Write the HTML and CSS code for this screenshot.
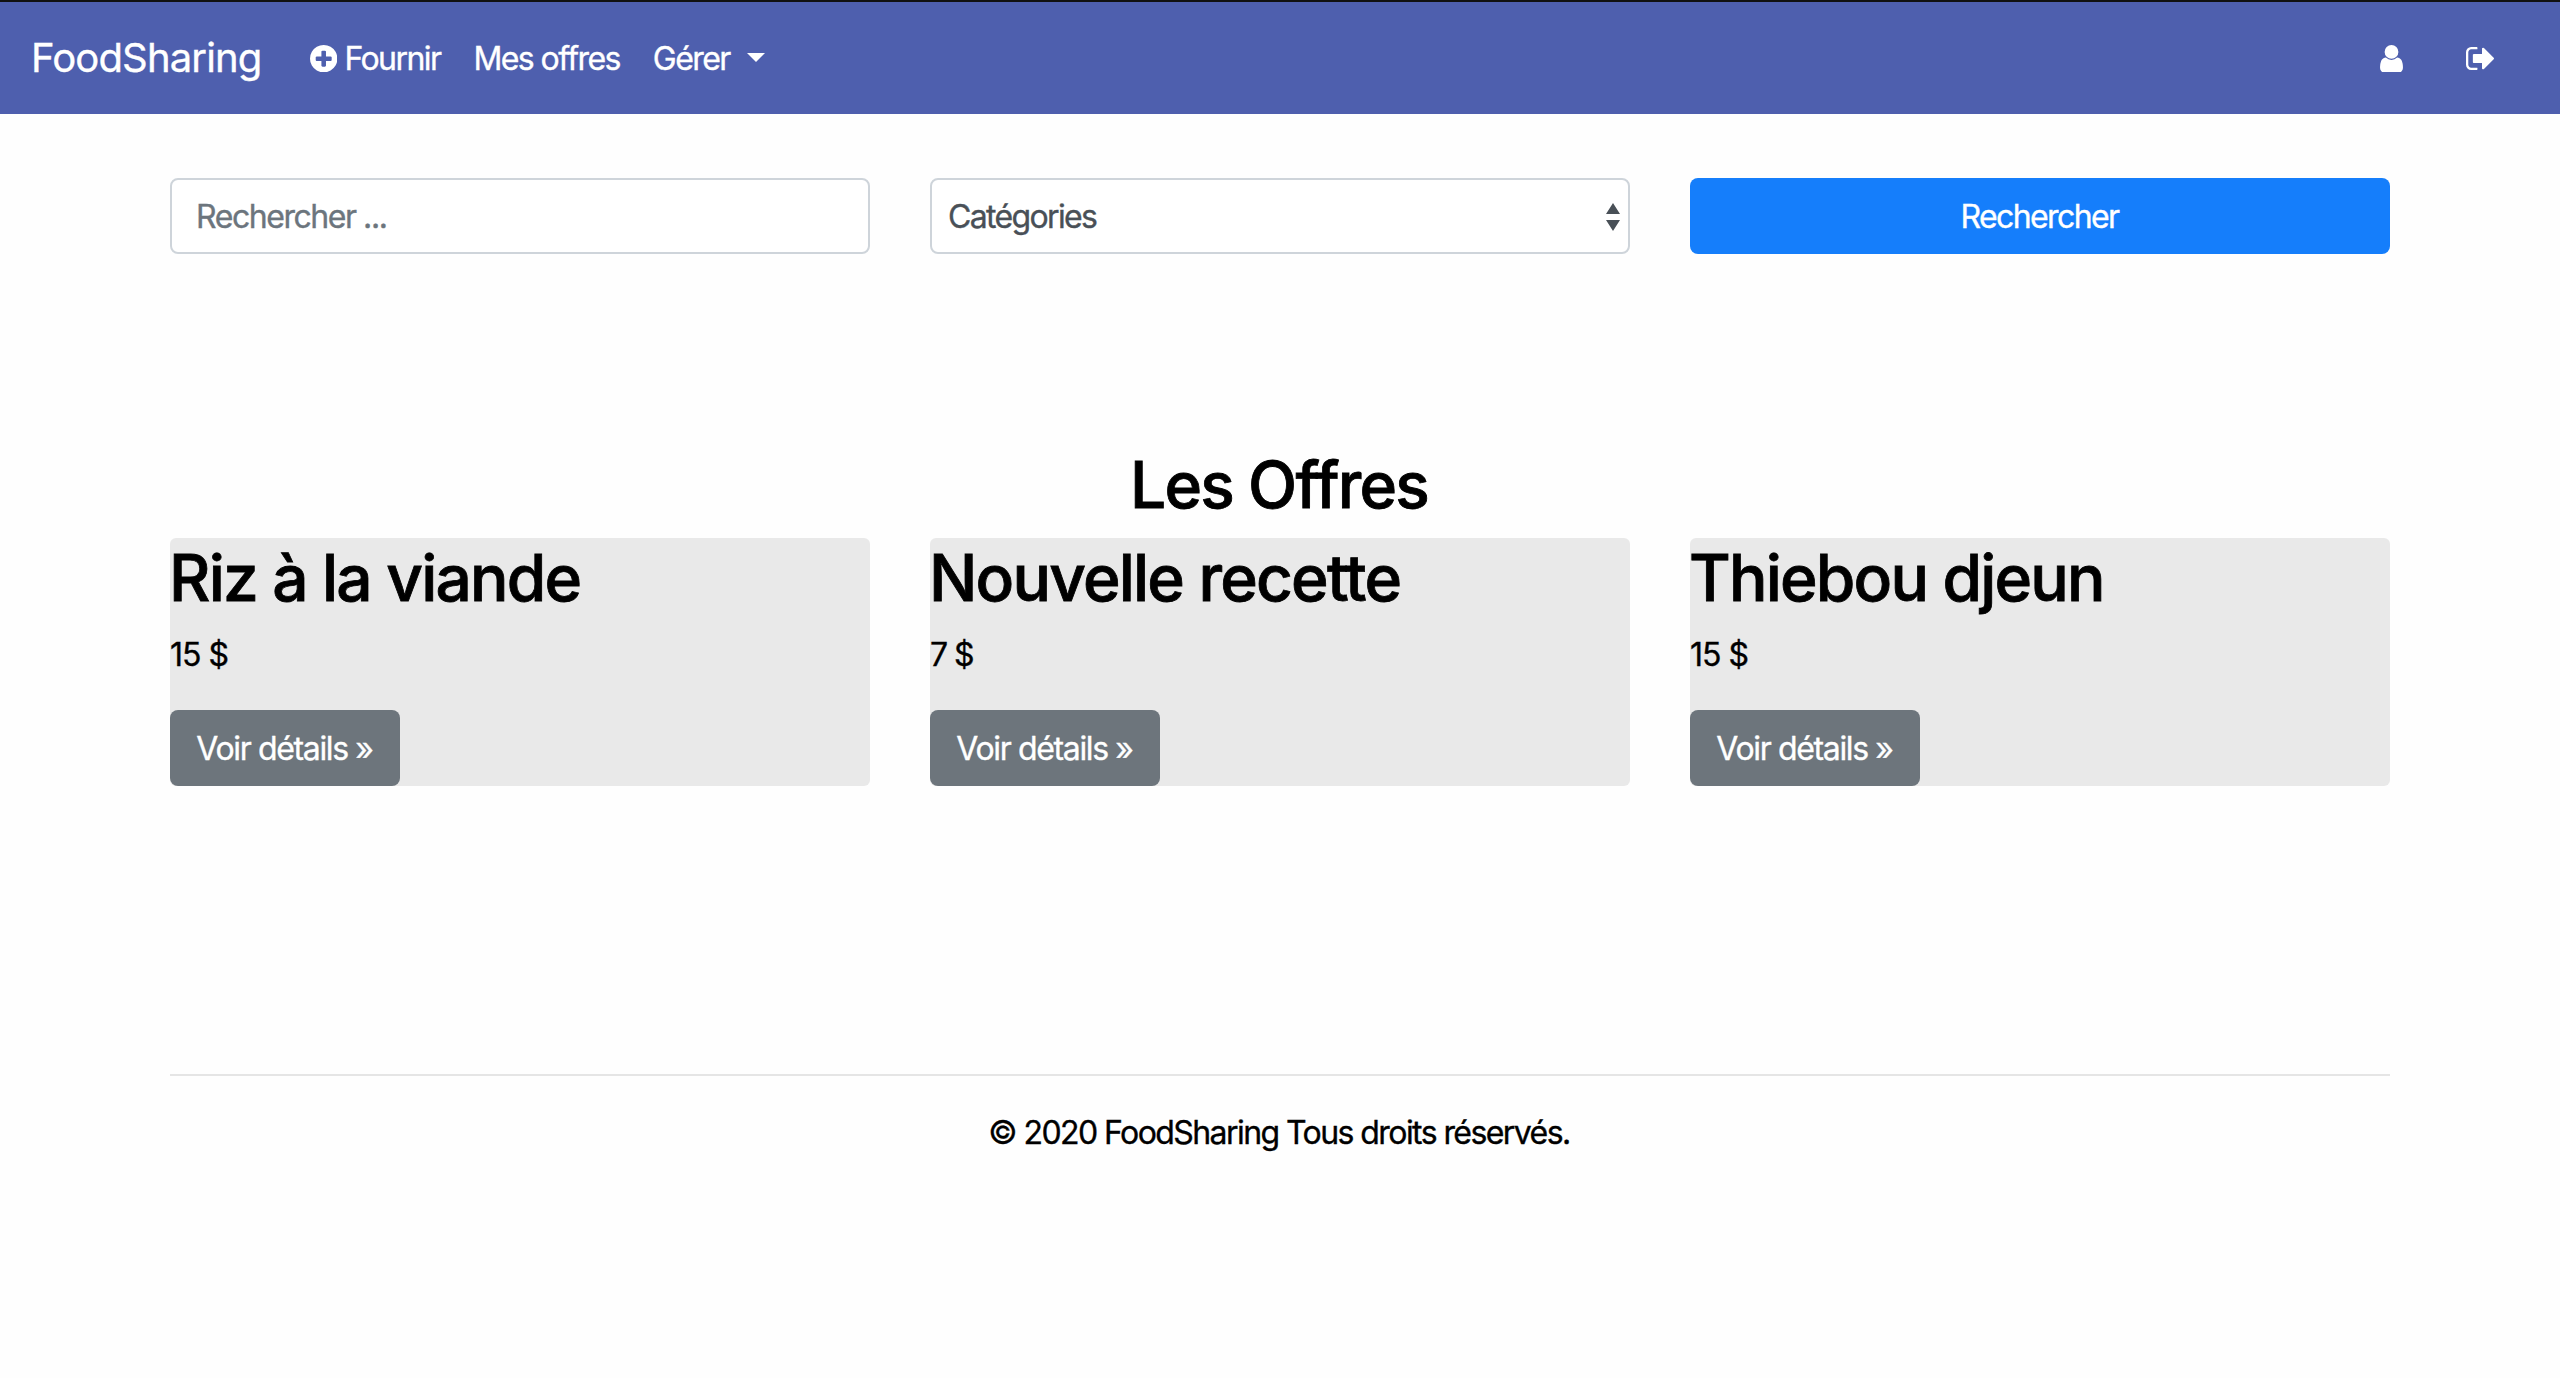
FILE: index.html
```
<!DOCTYPE html>
<html lang="fr">
<head>
<meta charset="utf-8">
<title>FoodSharing</title>
<link rel="stylesheet" href="styles.css">
</head>
<body>
<nav class="navbar">
  <a class="brand">FoodSharing</a>
  <ul class="nav-links">
    <li class="nav-item">
      <svg class="icon-plus" viewBox="128 128 1536 1536"><path d="M1344 960v-128q0-26-19-45t-45-19h-256v-256q0-26-19-45t-45-19h-128q-26 0-45 19t-19 45v256h-256q-26 0-45 19t-19 45v128q0 26 19 45t45 19h256v256q0 26 19 45t45 19h128q26 0 45-19t19-45v-256h256q26 0 45-19t19-45zm320-64q0 209-103 385.5t-279.5 279.5-385.5 103-385.5-103-279.5-279.5-103-385.5 103-385.5 279.5-279.5 385.5-103 385.5 103 279.5 279.5 103 385.5z"/></svg>
      <span>Fournir</span>
    </li>
    <li class="nav-item"><span>Mes offres</span></li>
    <li class="nav-item"><span>Gérer</span><span class="caret"></span></li>
  </ul>
  <div class="nav-actions">
    <svg class="icon-user" viewBox="256 128 1280 1536"><path d="M1536 1399q0 109-62.5 187t-150.5 78h-854q-88 0-150.5-78t-62.5-187q0-85 8.5-160.5t31.5-152 58.5-131 94-89 134.5-34.5q131 128 313 128t313-128q76 0 134.5 34.5t94 89 58.5 131 31.5 152 8.5 160.5zm-256-887q0 159-112.5 271.5t-271.5 112.5-271.5-112.5-112.5-271.5 112.5-271.5 271.5-112.5 271.5 112.5 112.5 271.5z"/></svg>
    <svg class="icon-exit" viewBox="64 256 1568 1280"><path d="M704 1440q0 4 1 20t.5 26.5-3 23.5-10 19.5-20.5 6.5h-320q-119 0-203.5-84.5t-84.5-203.5v-704q0-119 84.5-203.5t203.5-84.5h320q13 0 22.5 9.5t9.5 22.5q0 4 1 20t.5 26.5-3 23.5-10 19.5-20.5 6.5h-320q-66 0-113 47t-47 113v704q0 66 47 113t113 47h312l11.5 1 11.5 3 8 5.5 7 9 2 13.5zm928-544q0 26-19 45l-544 544q-19 19-45 19t-45-19-19-45v-288h-448q-26 0-45-19t-19-45v-384q0-26 19-45t45-19h448v-288q0-26 19-45t45-19 45 19l544 544q19 19 19 45z"/></svg>
  </div>
</nav>

<main class="container">
  <form class="row search">
    <input class="field" type="text" placeholder="Rechercher ...">
    <div class="field select">
      <span>Catégories</span>
      <svg class="arrows" viewBox="0 0 14 28"><path d="M7 0l7 11H0zM0 17h14L7 28z"/></svg>
    </div>
    <button class="btn btn-primary" type="button">Rechercher</button>
  </form>

  <h2 class="title section-title">Les Offres</h2>

  <div class="row">
    <article class="card">
      <h2 class="title">Riz à la viande</h2>
      <p class="price">15 $</p>
      <a class="btn btn-secondary">Voir détails »</a>
    </article>
    <article class="card">
      <h2 class="title">Nouvelle recette</h2>
      <p class="price price-short">7 $</p>
      <a class="btn btn-secondary">Voir détails »</a>
    </article>
    <article class="card">
      <h2 class="title">Thiebou djeun</h2>
      <p class="price">15 $</p>
      <a class="btn btn-secondary">Voir détails »</a>
    </article>
  </div>

  <footer class="footer">© 2020 FoodSharing Tous droits réservés.</footer>
</main>
</body>
</html>
```
FILE: styles.css
```
* { box-sizing: border-box; }

body {
  margin: 0;
  background: #fefefe;
  color: #000;
  font: 400 32px/48px Inter, "Liberation Sans", sans-serif;
  font-feature-settings: "calt" 0, "liga" 0, "dlig" 0;
  letter-spacing: -1.57px;
  -webkit-text-stroke: 0.35px currentColor;
}

svg { display: block; flex: none; fill: currentColor; }

/* Navigation */
.navbar {
  display: flex;
  align-items: center;
  height: 114px;
  padding: 1px 66px 0 31px;
  border-top: 2px solid #111;
  background: #4e5fae;
  color: #fff;
}
.brand {
  width: 247px;
  margin-right: 32px;
  padding-bottom: 2px;
  font-size: 40px;
  line-height: 58px;
  letter-spacing: -0.85px;
}
.nav-links {
  display: flex;
  gap: 33px;
  margin: 0;
  padding: 0;
  list-style: none;
}
.nav-item { display: flex; align-items: center; }
.icon-plus { width: 27.4px; height: 27.4px; margin-right: 7px; }
.caret {
  margin: -3px 0 0 17px;
  border: 9.6px solid transparent;
  border-top-color: #fff;
  border-bottom: 0;
}
.nav-actions {
  display: flex;
  align-items: center;
  gap: 63.5px;
  margin-left: auto;
}
.icon-user { width: 23px; height: 27.5px; }
.icon-exit { width: 28px; height: 23px; }

/* Page grid */
.container { width: 2220px; margin: 0 auto; padding-top: 64px; }
.row {
  display: grid;
  grid-template-columns: repeat(3, 1fr);
  gap: 60px;
}

/* Search */
.field {
  width: 100%;
  height: 76px;
  padding: 12px 24px;
  border: 2px solid #ced4da;
  border-radius: 8px;
  background: #fff;
  color: #495057;
  font: inherit;
  letter-spacing: -1.45px;
}
.field::placeholder { color: #6c757d; opacity: 1; }
.select {
  display: flex;
  align-items: center;
  justify-content: space-between;
  padding: 13px 8px 11px 16px;
  letter-spacing: -1.65px;
}
.arrows { width: 14px; height: 28px; margin-top: -1px; }

.btn {
  display: block;
  height: 76px;
  padding: 15px 26px 13px;
  border: 0;
  border-radius: 8px;
  color: #fff;
  font: inherit;
  text-align: center;
}
.btn-primary { padding-right: 27px; background: #157efb; letter-spacing: -1.6px; }
.btn-secondary {
  width: 230px;
  padding-left: 25px;
  background: #6d757c;
  letter-spacing: -1.36px;
  white-space: nowrap;
}

/* Offers */
.title {
  margin: 0;
  font-size: 64px;
  font-weight: 500;
  line-height: 80px;
  letter-spacing: -1.8px;
  -webkit-text-stroke-width: 0.8px;
}
.section-title {
  margin: 191px 2px 13px 0;
  text-align: center;
}
.card {
  height: 248px;
  border-radius: 6px;
  background: #e9e9e9;
}
.card .title { margin-left: -1px; }
.price { margin: 13px 0 31px; letter-spacing: -1px; }
.price-short { letter-spacing: -1.6px; }

.footer {
  margin-top: 288px;
  padding: 33px 2px 0 0;
  border-top: 2px solid #e5e5e5;
  text-align: center;
}
```
